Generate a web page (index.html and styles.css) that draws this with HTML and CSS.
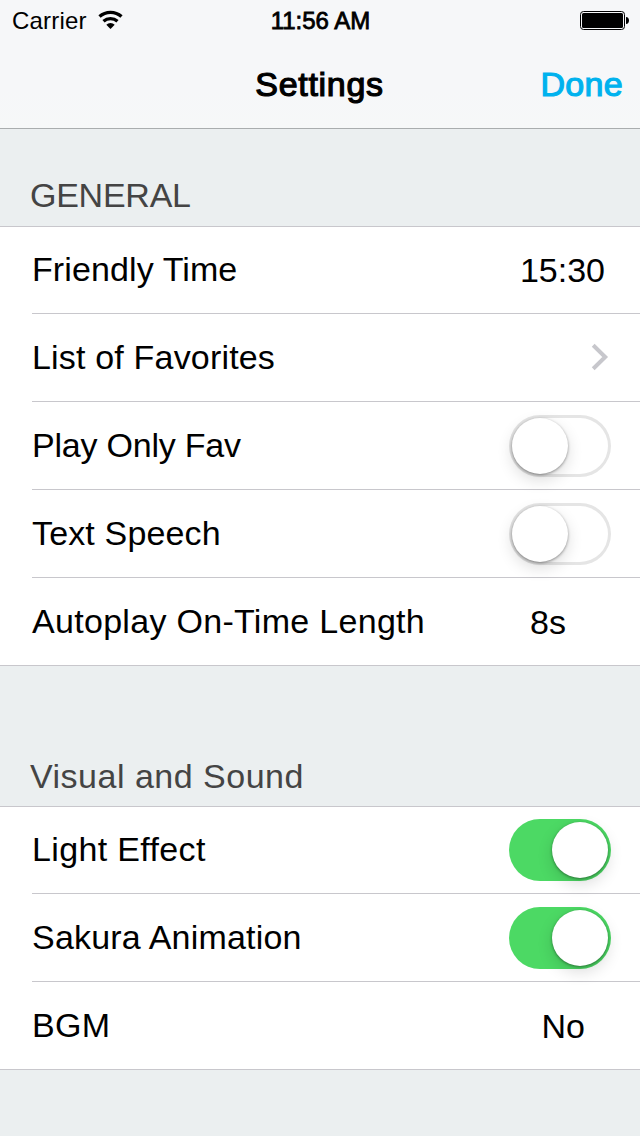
FILE: index.html
```html
<!DOCTYPE html>
<html lang="en">
<head>
<meta charset="utf-8">
<title>Settings</title>
<link rel="stylesheet" href="styles.css">
</head>
<body>
<header class="top">
  <div class="status">
    <div class="carrier"><span class="carrier-name">Carrier</span>
      <svg class="wifi" width="26" height="20" viewBox="0 0 26 20"><g fill="none" stroke="#000" stroke-width="3.3"><path d="M1.5 6.6A16.5 16.5 0 0 1 23.5 6.6"/><path d="M5.5 11.2A10.6 10.6 0 0 1 19.5 11.2"/></g><path d="M12.5 19L8.3 14.8A6 6 0 0 1 16.7 14.8Z"/></svg>
    </div>
    <span class="clock">11:56 AM</span>
    <svg class="battery" width="49" height="19" viewBox="0 0 49 19"><rect x=".5" y=".5" width="44" height="18" rx="3" fill="none" stroke="#000"/><rect x="2" y="2" width="41" height="15" rx="1.5"/><path d="M46 6C50 6 50 13 46 13Z"/></svg>
  </div>
  <nav class="navbar"><h1 class="title">Settings</h1><a class="done">Done</a></nav>
</header>
<main>
  <h2 class="heading general">GENERAL</h2>
  <section class="group">
    <div class="row"><span class="label friendly">Friendly Time</span><span class="value time">15:30</span></div>
    <div class="row"><span class="label favorites">List of Favorites</span><svg class="chevron" width="20" height="30" viewBox="0 0 20 30"><path d="M3.2 2.2L15.2 14L3.2 25.8" fill="none" stroke="#c7c7cc" stroke-width="4"/></svg></div>
    <div class="row"><span class="label play">Play Only Fav</span><span class="switch"><span class="knob"></span></span></div>
    <div class="row"><span class="label speech">Text Speech</span><span class="switch"><span class="knob"></span></span></div>
    <div class="row"><span class="label autoplay">Autoplay On-Time Length</span><span class="value length">8s</span></div>
  </section>
  <h2 class="heading visual">Visual and Sound</h2>
  <section class="group">
    <div class="row"><span class="label light">Light Effect</span><span class="switch on"><span class="knob"></span></span></div>
    <div class="row"><span class="label sakura">Sakura Animation</span><span class="switch on"><span class="knob"></span></span></div>
    <div class="row"><span class="label bgm">BGM</span><span class="value bgm-value">No</span></div>
  </section>
</main>
</body>
</html>
```
FILE: styles.css
```css
* { box-sizing: border-box; }
body {
  margin: 0;
  min-height: 1136px;
  background: #ebeff0;
  color: #000;
  font-family: "Liberation Sans", Arial, sans-serif;
  font-size: 34px;
}
h1, h2 { margin: 0; font-size: inherit; font-weight: 400; }
.top {
  height: 129px;
  background: linear-gradient(#f6f7f9 70%, #f6f8f8);
  border-bottom: 1px solid #a9adae;
}
.status {
  display: grid;
  grid-template-columns: 1fr auto 1fr;
  height: 40px;
  padding: 0 11px 0 12px;
  font-size: 24px;
  line-height: 42px;
}
.carrier { display: flex; gap: 11px; }
.carrier-name { letter-spacing: 0.2px; }
.wifi { margin-top: 10px; }
.clock { -webkit-text-stroke: 0.8px #000; }
.battery { justify-self: end; margin-top: 11px; }
.navbar {
  display: grid;
  grid-template-columns: 1fr auto 1fr;
  align-items: center;
  height: 88px;
  padding: 0 18px 0 17px;
}
.title { grid-column: 2; letter-spacing: 0.7px; -webkit-text-stroke: 1.2px #000; }
.done { justify-self: end; margin-right: -1px; letter-spacing: 0.3px; color: #00b2ee; -webkit-text-stroke: 1.2px #00b2ee; }
.heading {
  display: flex;
  align-items: flex-end;
  padding: 0 0 11px 30px;
  line-height: 40px;
  color: #444;
}
.general { height: 97px; letter-spacing: -0.25px; }
.visual { height: 140px; padding-bottom: 10px; letter-spacing: 0.5px; }
.group {
  background: #fff;
  border-top: 1px solid #c8c7cc;
  border-bottom: 1px solid #c8c7cc;
}
.row {
  display: flex;
  align-items: center;
  justify-content: space-between;
  height: 88px;
  margin-left: 32px;
  padding-right: 29px;
  border-bottom: 1px solid #c8c7cc;
}
.row:first-child, .row:last-child { height: 87px; }
.row:last-child { border-bottom: 0; }
.label, .value { line-height: 40px; white-space: nowrap; }
.label { padding-bottom: 2px; }
.friendly { letter-spacing: 0.1px; }
.favorites { letter-spacing: 0.18px; }
.play { letter-spacing: -0.22px; }
.speech { letter-spacing: 0.15px; }
.autoplay { letter-spacing: 0.3px; }
.light { letter-spacing: 0.35px; }
.sakura { letter-spacing: 0.2px; }
.bgm { letter-spacing: 0.3px; }
.time { margin-right: 6px; }
.length { margin-right: 45px; }
.bgm-value { margin-right: 26px; }
.chevron { margin-right: 1px; }
.switch {
  display: flex;
  width: 102px;
  height: 62px;
  padding: 3px;
  border-radius: 31px;
  box-shadow: inset 0 0 0 3px #e5e5e5;
}
.knob {
  width: 56px;
  height: 56px;
  border-radius: 50%;
  background: #fff;
  box-shadow: 0 6px 16px rgba(0, 0, 0, 0.14), 0 1px 3px rgba(0, 0, 0, 0.4);
}
.on { justify-content: flex-end; background: #4cd964; box-shadow: none; }
```
